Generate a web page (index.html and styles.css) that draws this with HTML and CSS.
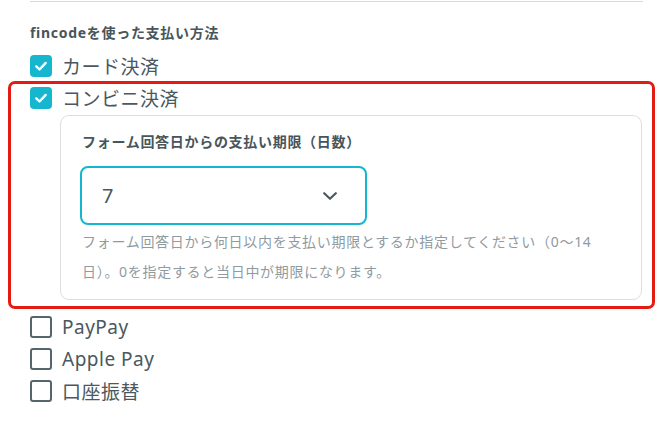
FILE: index.html
```html
<!DOCTYPE html>
<html lang="ja">
<head>
    <meta charset="UTF-8">
    <title>fincode 支払い方法</title>
    <link rel="stylesheet" href="styles.css">
</head>
<body>
    <div class="page">
        <hr class="rule">

        <h2 class="section-title">fincodeを使った支払い方法</h2>

        <!-- Payment methods -->
        <ul class="methods">
            <li class="method">
                <span class="box checked">
                    <svg viewBox="0 0 22 22" width="22" height="22"><path d="M6.3 11.4l3.2 3.1 6.2-6.6" fill="none" stroke="#fff" stroke-width="2.4" stroke-linecap="round" stroke-linejoin="round"/></svg>
                </span>
                カード決済
            </li>

            <li class="highlight">
                <div class="method method-tight">
                    <span class="box checked">
                        <svg viewBox="0 0 22 22" width="22" height="22"><path d="M6.3 11.4l3.2 3.1 6.2-6.6" fill="none" stroke="#fff" stroke-width="2.4" stroke-linecap="round" stroke-linejoin="round"/></svg>
                    </span>
                    コンビニ決済
                </div>

                <div class="card">
                    <h3 class="card-title">フォーム回答日からの支払い期限（日数）</h3>
                    <div class="select-box">
                        <span class="select-value">7</span>
                        <svg class="chevron" viewBox="0 0 14 8" width="14" height="8"><path d="M1.2 1.2l5.8 5.6 5.8-5.6" fill="none" stroke="#4a5a62" stroke-width="2.2" stroke-linecap="round" stroke-linejoin="round"/></svg>
                    </div>
                    <p class="help">フォーム回答日から何日以内を支払い期限とするか指定してください（0〜14日）。0を指定すると当日中が期限になります。</p>
                </div>
            </li>

            <li class="method method-after">
                <span class="box"></span>
                PayPay
            </li>
            <li class="method">
                <span class="box"></span>
                Apple Pay
            </li>
            <li class="method">
                <span class="box"></span>
                口座振替
            </li>
        </ul>
    </div>
</body>
</html>
```

FILE: styles.css
```css
:root {
    --text-color: #4a5860;
    --muted-color: #8f9ba1;
    --accent-color: #17b6cf;
    --alert-color: #e31b12;
    --border-color: #dcdfe2;
}

body {
    margin: 0;
    background: #fff;
    font-family: 'Noto Sans', 'Noto Sans CJK JP', sans-serif;
    color: var(--text-color);
}

.page {
    width: 613px;
    padding: 1px 0 0 30px;
}

.rule {
    margin: 0;
    border: none;
    border-top: 1px solid #d9d9d9;
}

.section-title {
    margin: 21px 0 7px;
    font-size: 14px;
    line-height: 20px;
    letter-spacing: 0.05em;
    font-weight: 700;
    color: #47555c;
}

.methods {
    list-style: none;
    margin: 0;
    padding: 0;
}

.method {
    display: flex;
    align-items: center;
    gap: 10px;
    height: 32px;
    font-size: 19px;
    letter-spacing: 0.5px;
}

.method-tight {
    height: 28px;
}

.method-after {
    margin-top: 2px;
}

.box {
    flex: none;
    width: 22px;
    height: 22px;
    box-sizing: border-box;
    border: 2px solid #56656d;
    border-radius: 3px;
}

.box.checked {
    border: none;
    border-radius: 4px;
    background: var(--accent-color);
}

.box svg {
    display: block;
}

/* red frame around the convenience store option */
.highlight {
    margin: -1px -12px 0 -22px;
    padding: 0 10px 6px 19px;
    border: 3px solid var(--alert-color);
    border-radius: 7px;
}

.card {
    margin: 3px 0 0 30px;
    padding: 16px 19px 12px;
    border: 1px solid var(--border-color);
    border-radius: 9px;
}

.card-title {
    margin: 0 0 14px 2px;
    font-size: 14px;
    line-height: 20px;
    letter-spacing: 0.05em;
    font-weight: 700;
    color: #47555c;
}

.select-box {
    display: flex;
    align-items: center;
    justify-content: space-between;
    width: 287px;
    height: 59px;
    box-sizing: border-box;
    padding: 0 28px 0 20px;
    border: 2px solid var(--accent-color);
    border-radius: 8px;
    font-size: 20px;
}

.chevron {
    display: block;
    margin-top: 1px;
}

.help {
    margin: 2px 0 0 2px;
    font-size: 14px;
    line-height: 30px;
    letter-spacing: 0.05em;
    color: var(--muted-color);
}
```
